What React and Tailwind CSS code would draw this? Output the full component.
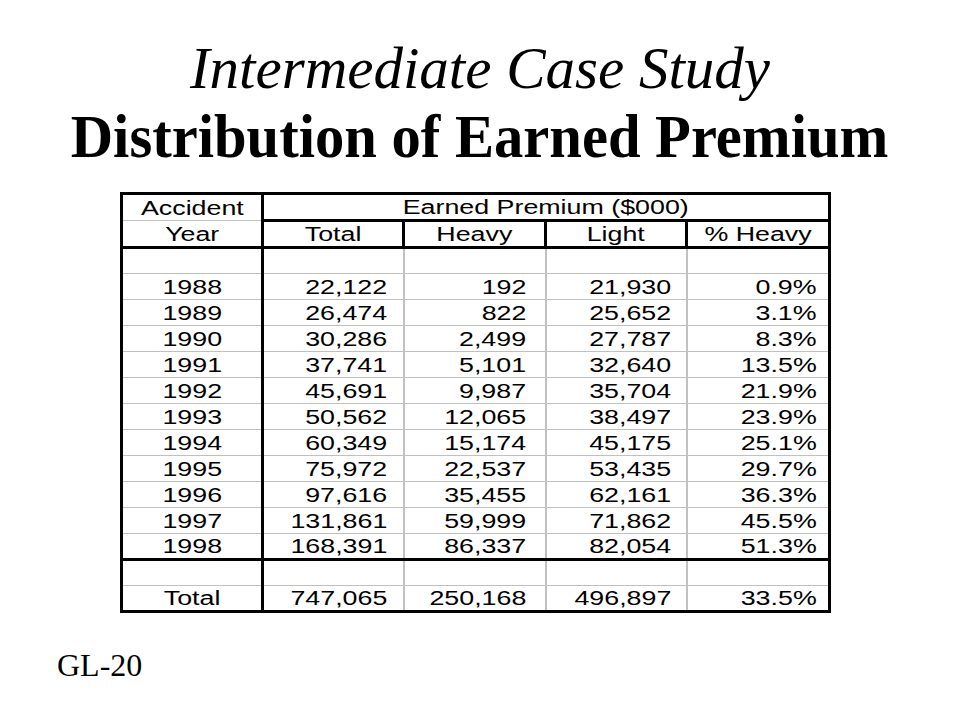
import React from "react";

const rows = [
  ["1988", "22,122", "192", "21,930", "0.9%"],
  ["1989", "26,474", "822", "25,652", "3.1%"],
  ["1990", "30,286", "2,499", "27,787", "8.3%"],
  ["1991", "37,741", "5,101", "32,640", "13.5%"],
  ["1992", "45,691", "9,987", "35,704", "21.9%"],
  ["1993", "50,562", "12,065", "38,497", "23.9%"],
  ["1994", "60,349", "15,174", "45,175", "25.1%"],
  ["1995", "75,972", "22,537", "53,435", "29.7%"],
  ["1996", "97,616", "35,455", "62,161", "36.3%"],
  ["1997", "131,861", "59,999", "71,862", "45.5%"],
  ["1998", "168,391", "86,337", "82,054", "51.3%"],
];

function C({ children }) {
  return <span className="inline-block scale-x-[1.34] origin-center">{children}</span>;
}
function R({ children }) {
  return <span className="inline-block scale-x-[1.34] origin-right">{children}</span>;
}

function DataRow({ r, last, blank }) {
  const bb = last ? "border-b-[3px] border-b-black" : "border-b border-b-[#c0c0c0]";
  return (
    <tr className="h-[26px]">
      <td className={`border-r-[3px] border-r-black ${bb} text-center p-0`}>{!blank && <C>{r[0]}</C>}</td>
      <td className={`border-r-2 border-r-[#c0c0c0] ${bb} text-right p-0 pr-[15px]`}>{!blank && <R>{r[1]}</R>}</td>
      <td className={`border-r-2 border-r-[#c0c0c0] ${bb} text-right p-0 pr-[18px]`}>{!blank && <R>{r[2]}</R>}</td>
      <td className={`border-r-2 border-r-[#c0c0c0] ${bb} text-right p-0 pr-[14px]`}>{!blank && <R>{r[3]}</R>}</td>
      <td className={`${bb} text-right p-0 pr-[11px]`}>{!blank && <R>{r[4]}</R>}</td>
    </tr>
  );
}

export default function App() {
  return (
    <div className="w-[960px] h-[720px] bg-white text-black relative overflow-hidden">
      <div className="pt-[36px] flex flex-col items-center font-['Liberation_Serif','Times_New_Roman',serif]">
        <div className="italic text-[59px] leading-[64px]">Intermediate Case Study</div>
        <div className="font-bold text-[62px] leading-[72px] scale-x-[0.945]">Distribution of Earned Premium</div>
      </div>
      <table className="ml-[120px] mt-[20px] table-fixed border-collapse border-[3px] border-black font-['Liberation_Sans',Arial,sans-serif] text-[20px] leading-none">
        <colgroup>
          <col className="w-[141px]" />
          <col className="w-[141px]" />
          <col className="w-[142px]" />
          <col className="w-[141px]" />
          <col className="w-[143px]" />
        </colgroup>
        <tbody>
          <tr className="h-[27px]">
            <td className="border-r-[3px] border-r-black border-b border-b-[#c0c0c0] text-center p-0"><C>Accident</C></td>
            <td colSpan={4} className="border-b-[3px] border-b-black text-center p-0"><C>Earned Premium ($000)</C></td>
          </tr>
          <tr className="h-[27px]">
            <td className="border-r-[3px] border-r-black border-b-[3px] border-b-black text-center p-0"><C>Year</C></td>
            <td className="border-r-[3px] border-r-black border-b-[3px] border-b-black text-center p-0"><C>Total</C></td>
            <td className="border-r-[3px] border-r-black border-b-[3px] border-b-black text-center p-0"><C>Heavy</C></td>
            <td className="border-r-[3px] border-r-black border-b-[3px] border-b-black text-center p-0"><C>Light</C></td>
            <td className="border-b-[3px] border-b-black text-center p-0"><C>% Heavy</C></td>
          </tr>
          <DataRow r={[]} blank />
          {rows.map((r, i) => (
            <DataRow key={r[0]} r={r} last={i === rows.length - 1} />
          ))}
          <DataRow r={[]} blank />
          <DataRow r={["Total", "747,065", "250,168", "496,897", "33.5%"]} />
        </tbody>
      </table>
      <div className="pl-[57px] mt-[34px] font-['Liberation_Serif','Times_New_Roman',serif] text-[32px] leading-[36px]">GL-20</div>
    </div>
  );
}
